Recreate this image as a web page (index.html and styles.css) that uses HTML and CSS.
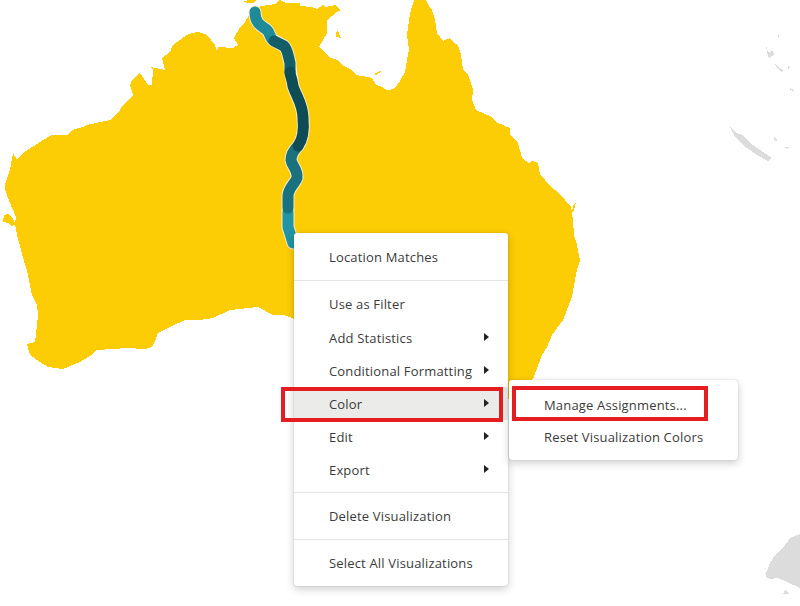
FILE: index.html
```html
<!DOCTYPE html>
<html lang="en">
<head>
<meta charset="utf-8">
<title>Map visualization context menu</title>
<link rel="stylesheet" href="styles.css">
</head>
<body>
<div class="canvas">
  <svg class="map" width="800" height="606" viewBox="0 0 800 606" aria-hidden="true">
    <path class="land" d="M280 0 L286 3 L300 3 L300 6 L312 7 L317 9 L323 5 L325 7 L335 5 L341 10 L335 13 L332 16 L327 20 L327 33 L323 40 L319 47 L325 53 L331 58 L337 60 L342 65 L352 70 L356 75 L362 76 L372 78 L376 85 L382 87 L387 90 L394 89 L400 81 L405 72 L407 60 L409 50 L408 42 L407 35 L409 20 L411 10 L414 0 L426 0 L429 6 L432 10 L435 20 L437 33 L443 41 L450 38 L453 42 L458 45 L461 55 L463 70 L468 75 L470 80 L473 90 L472 100 L476 110 L483 113 L490 116 L496 122 L510 128 L510 135 L518 143 L522 158 L529 163 L532 161 L538 163 L540 175 L545 180 L548 184 L555 190 L565 200 L571 207 L573 220 L574 235 L577 245 L580 260 L577 270 L575 280 L572 297 L563 320 L552 335 L547 347 L542 355 L533 379 L510 400 L300 330 L293 318 L283 315 L277 315 L273 315 L258 307 L230 310 L213 318 L200 320 L185 320 L170 327 L158 333 L155 341 L152 347 L145 349 L127 348 L97 350 L90 356 L80 362 L63 369 L48 367 L40 362 L30 355 L27 344 L35 342 L37 325 L38 315 L37 305 L32 295 L27 270 L25 265 L17 235 L15 224 L16 217 L10 203 L5 190 L5 185 L10 170 L13 153 L17 160 L23 153 L43 140 L52 135 L67 135 L72 130 L83 127 L87 125 L110 120 L120 110 L123 105 L133 95 L130 85 L132 80 L140 73 L148 85 L152 85 L153 70 L150 67 L165 70 L162 58 L170 52 L173 45 L177 42 L187 35 L192 33 L198 32 L207 35 L215 45 L217 52 L218 47 L233 48 L238 45 L234 38 L240 27 L245 22 L248 17 L253 8 L262 6 L275 4 Z"/>
    <path class="land" d="M243 1 L250 0 L256 0 L254 3 L247 3 Z"/>
    <path class="land" d="M336 32 L338 31 L341 38 L336 37 Z"/>
    <path class="land" d="M374 74 L380 71 L381 72 L376 75 Z"/>
    <path class="land" d="M576 202 L574 210 L572 212 L573 206 Z"/>
    <path class="land" d="M4 215 L8 214 L13 219 L16 224 L12 226 L8 223 L3 222 Z"/>
    <path class="grey" d="M730 127 L737 133 L742 135 L750 143 L760 150 L772 158 L768 161 L757 155 L743 145 L735 137 Z"/>
    <path class="grey" d="M766 45 L768 52 L773 51 L774 55 L769 58 L767 52 Z"/>
    <path class="grey" d="M775 63 L779 68 L783 70 L781 72 L776 67 Z"/>
    <path class="grey" d="M790 88 L794 90 L793 91 L790 90 Z"/>
    <path class="grey" d="M774 137 L777 140 L776 142 L774 140 Z"/>
    <path class="grey" d="M785 147 L789 147 L788 149 L785 148 Z"/>
    <path class="grey" d="M778 32 L779 37 L778 38 Z"/>
    <path class="grey" d="M788 66 L790 68 L788 69 Z"/>
    <path class="grey" d="M800 534 L790 538 L783 548 L775 555 L770 563 L767 572 L765 573 L767 578 L770 579 L778 578 L787 582 L800 588 Z"/>
    <path class="grey" d="M785 590 L789 594 L783 594 Z"/>
    <path class="halo" d="M255 12 C255 24 262 26 267 30 C270 33 270 38 273 40 L284 46 C288 50 288 56 290 63 C290 72 292 78 293 86 C296 96 303 104 303 118 C304 128 304 138 298 146 C294 150 291 154 291 160 C292 166 298 170 297 178 C295 184 288 188 288 196 L288 213 L288 227 L293 243"/>
    <path class="seg s5" d="M288 212 L288 227 L293 243"/>
    <path class="seg s4" d="M298 146 C294 150 291 154 291 160 C292 166 298 170 297 178 C295 184 288 188 288 196 L288 208"/>
    <path class="seg s1" d="M255 12 C255 24 262 26 267 30 C270 33 270 38 273 40"/>
    <path class="seg s2" d="M274 41 L284 46 C288 50 288 56 290 63 L290 72"/>
    <path class="seg s3" d="M290 72 C290 76 292 78 293 86 C296 96 303 104 303 118 C304 128 304 138 298 146"/>
  </svg>

  <div class="menu main-menu">
    <div class="section">
      <div class="row">Location Matches</div>
    </div>
    <div class="section">
      <div class="row row-lead">Use as Filter</div>
      <div class="row">Add Statistics<span class="arrow"></span></div>
      <div class="row">Conditional Formatting<span class="arrow"></span></div>
      <div class="row active">Color<span class="arrow"></span></div>
      <div class="row">Edit<span class="arrow"></span></div>
      <div class="row">Export<span class="arrow"></span></div>
    </div>
    <div class="section">
      <div class="row">Delete Visualization</div>
    </div>
    <div class="section">
      <div class="row">Select All Visualizations</div>
    </div>
  </div>

  <div class="menu sub-menu">
    <div class="row">Manage Assignments...</div>
    <div class="row row-short">Reset Visualization Colors</div>
  </div>

  <div class="callout callout-color"></div>
  <div class="callout callout-manage"></div>
</div>
</body>
</html>
```
FILE: styles.css
```css
html, body {
  margin: 0;
  padding: 0;
  background: #fff;
}

.canvas {
  position: relative;
  width: 800px;
  height: 606px;
  overflow: hidden;
  font-family: "Open Sans", "Noto Sans", sans-serif;
  font-size: 13px;
  letter-spacing: .17px;
  color: #3b3b3b;
}

.map {
  position: absolute;
  left: 0;
  top: 0;
}

.land {
  fill: #fccc05;
  shape-rendering: crispEdges;
}

.grey {
  fill: #dcdcdc;
  shape-rendering: crispEdges;
}

.halo, .seg {
  fill: none;
  stroke-linecap: round;
  stroke-linejoin: round;
}

.halo { stroke: #f4eccb; stroke-width: 13; }
.seg { stroke-width: 11; }
.s1 { stroke: #1f8a98; }
.s2 { stroke: #125e69; }
.s3 { stroke: #0e4c56; }
.s4 { stroke: #19727e; }
.s5 { stroke: #2394a3; }

.menu {
  position: absolute;
  background: #fff;
  border-radius: 3px;
  box-shadow: 0 0 1px rgba(0, 0, 0, .35), 0 3px 9px rgba(0, 0, 0, .2);
}

.main-menu {
  left: 294px;
  top: 233px;
  width: 214px;
}

.sub-menu {
  left: 509px;
  top: 380px;
  width: 229px;
  padding: 8px 0;
}

.section {
  padding: 6px 0 7px;
  border-bottom: 1px solid #e3e3e3;
}

.section:first-child { padding-top: 7px; }
.section:last-child { border-bottom: 0; }

.row {
  display: flex;
  align-items: center;
  justify-content: space-between;
  height: 33px;
  padding: 0 19px 0 35px;
  white-space: nowrap;
}

.row-lead { margin-bottom: 1px; }
.row-short { height: 31px; }

.section:nth-child(2) { padding-bottom: 6px; }

.active { background: #ebebea; }

.arrow {
  width: 0;
  height: 0;
  margin-bottom: 2px;
  border-left: 5px solid #222;
  border-top: 4.5px solid transparent;
  border-bottom: 4.5px solid transparent;
}

.callout {
  position: absolute;
  box-sizing: border-box;
  border: 4px solid #e41e20;
}

.callout-color {
  left: 281px;
  top: 387px;
  width: 222px;
  height: 35px;
}

.callout-manage {
  left: 512px;
  top: 386px;
  width: 196px;
  height: 35px;
}
```
